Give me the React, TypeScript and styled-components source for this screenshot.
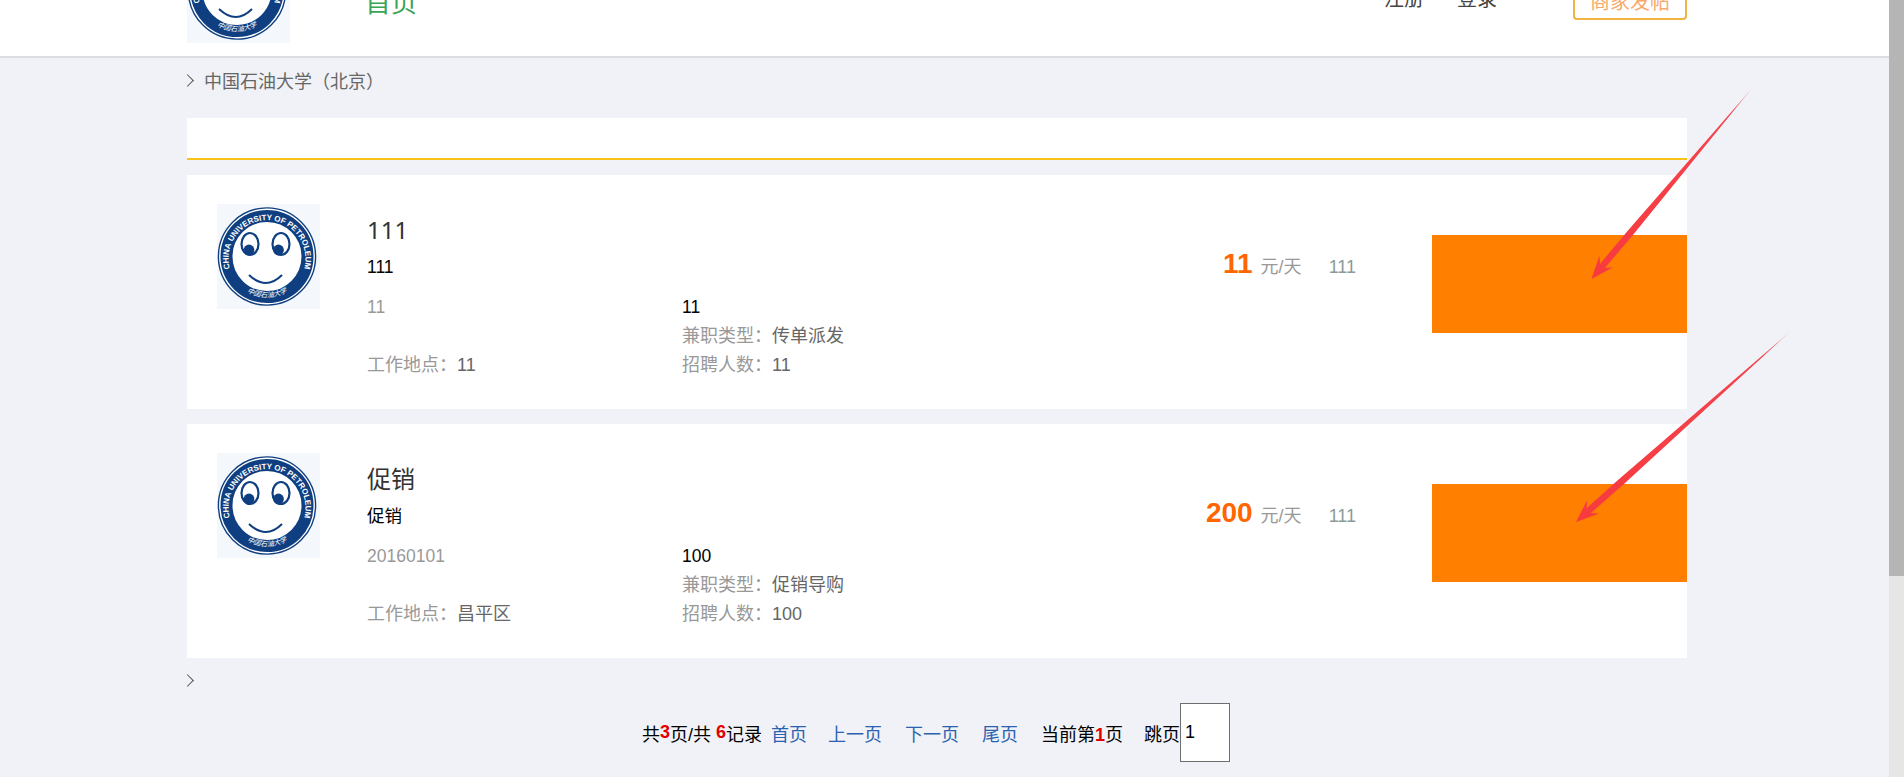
import { useId } from "react";
import styled, { createGlobalStyle } from "styled-components";

interface JobItem {
  title: string;
  subtitle: string;
  date: string;
  extra: string;
  jobType: string;
  place: string;
  people: string;
  price: string;
  unitNote: string;
}

const jobs: JobItem[] = [
  {
    title: "111",
    subtitle: "111",
    date: "11",
    extra: "11",
    jobType: "传单派发",
    place: "11",
    people: "11",
    price: "11",
    unitNote: "111",
  },
  {
    title: "促销",
    subtitle: "促销",
    date: "20160101",
    extra: "100",
    jobType: "促销导购",
    place: "昌平区",
    people: "100",
    price: "200",
    unitNote: "111",
  },
];

const GlobalStyle = createGlobalStyle`
  html, body {
    margin: 0;
    padding: 0;
    height: 777px;
    overflow: hidden;
    background: #f1f2f7;
    font-family: "Liberation Sans", "Noto Sans CJK SC", sans-serif;
  }
`;

const Logo = () => {
  const id = useId();
  return (
    <LogoSvg viewBox="0 0 103 105">
      <rect width="103" height="105" fill="#f4f8fd" />
      <circle cx="50" cy="52.5" r="48.6" fill="#fff" stroke="#0f3f80" strokeWidth="1.4" />
      <circle cx="50" cy="52.5" r="40.5" fill="#fff" stroke="#0f3f80" strokeWidth="12" />
      <defs>
        <path id={`${id}top`} d="M 12.2 62 A 38.5 38.5 0 1 1 87.8 62" />
        <path id={`${id}bottom`} d="M 13 70 A 41 41 0 0 0 87 70" />
      </defs>
      <text fill="#fff" fontSize="8" fontWeight="700" fontFamily="Liberation Sans, sans-serif">
        <textPath href={`#${id}top`} startOffset="50%" textAnchor="middle">
          CHINA UNIVERSITY OF PETROLEUM
        </textPath>
      </text>
      <text fill="#fff" fontSize="7" fontStyle="italic" fontFamily="Noto Sans CJK SC, sans-serif">
        <textPath href={`#${id}bottom`} startOffset="50%" textAnchor="middle">
          中国石油大学
        </textPath>
      </text>
      <ellipse cx="33" cy="40" rx="8.5" ry="11" fill="#fff" stroke="#0f3f80" strokeWidth="2.2" />
      <ellipse cx="64" cy="40" rx="8.5" ry="11" fill="#fff" stroke="#0f3f80" strokeWidth="2.2" />
      <circle cx="32" cy="46" r="5.4" fill="#0f3f80" />
      <circle cx="61.5" cy="46" r="5.4" fill="#0f3f80" />
      <path d="M32 71 Q49 87 65 71" fill="none" stroke="#0f3f80" strokeWidth="2" />
    </LogoSvg>
  );
};

interface ArrowProps {
  tail: [number, number];
  tip: [number, number];
}

// tapered red annotation arrow, thin at the tail and fat next to the head
const Arrow = ({ tail, tip }: ArrowProps) => {
  const dx = tail[0] - tip[0];
  const dy = tail[1] - tip[1];
  const len = Math.hypot(dx, dy);
  const ux = dx / len;
  const uy = dy / len;
  const at = (along: number, side: number) =>
    `${tip[0] + ux * along - uy * side},${tip[1] + uy * along + ux * side}`;
  const points = [
    at(0, 0),
    at(23, 9),
    at(17, 3.2),
    at(60, 3.4),
    at(len, 0),
    at(60, -3.4),
    at(17, -3.2),
    at(23, -9),
  ].join(" ");
  const gradientId = `fade${Math.round(tail[0])}`;
  return (
    <>
      <defs>
        <linearGradient
          id={gradientId}
          gradientUnits="userSpaceOnUse"
          x1={tail[0]}
          y1={tail[1]}
          x2={tip[0]}
          y2={tip[1]}
        >
          <stop offset="0" stopColor="#e8c4c8" />
          <stop offset="0.14" stopColor="#f2444e" />
          <stop offset="1" stopColor="#f83a3e" />
        </linearGradient>
      </defs>
      <polygon points={points} fill={`url(#${gradientId})`} />
    </>
  );
};

const App = () => {
  return (
    <Page>
      <GlobalStyle />
      <Header>
        <HeaderInner>
          <HeaderLogo>
            <Logo />
          </HeaderLogo>
          <HomeLink>首页</HomeLink>
          <NavSpacer />
          <NavLink>注册</NavLink>
          <NavLink>登录</NavLink>
          <PostButton>商家发帖</PostButton>
        </HeaderInner>
      </Header>

      <Main>
        <Crumb>
          <Chevron />
          中国石油大学（北京）
        </Crumb>
        <TitleBand />

        <JobList>
          {jobs.map((job) => (
            <JobCard key={job.title}>
              <CardLogo>
                <Logo />
              </CardLogo>
              <JobInfo>
                <JobTitle>{job.title}</JobTitle>
                <JobSubtitle>{job.subtitle}</JobSubtitle>
                <InfoGrid>
                  <InfoCell>
                    <DateText>{job.date}</DateText>
                    <InfoLine>
                      工作地点：<InfoValue>{job.place}</InfoValue>
                    </InfoLine>
                  </InfoCell>
                  <InfoCell>
                    <ExtraText>{job.extra}</ExtraText>
                    <InfoLine>
                      兼职类型：<InfoValue>{job.jobType}</InfoValue>
                    </InfoLine>
                    <InfoLine>
                      招聘人数：<InfoValue>{job.people}</InfoValue>
                    </InfoLine>
                  </InfoCell>
                </InfoGrid>
              </JobInfo>
              <PriceBox>
                <Price>{job.price}</Price>
                <Unit>元/天</Unit>
                <UnitNote>{job.unitNote}</UnitNote>
              </PriceBox>
              <ApplyBlock />
            </JobCard>
          ))}
        </JobList>

        <BottomCrumb>
          <Chevron />
        </BottomCrumb>

        <Pager>
          共<PagerNum>3</PagerNum>页/共 <PagerNum>6</PagerNum>记录 <PagerLink>首页</PagerLink>
          <PagerLink>上一页</PagerLink>
          <PagerLink>下一页</PagerLink>
          <PagerLink>尾页</PagerLink>
          <PagerCurrent>
            当前第<PagerNum>1</PagerNum>页
          </PagerCurrent>
          <PagerJump>跳页</PagerJump>
          <PagerInput defaultValue="1" />
        </Pager>
      </Main>

      <Scrollbar>
        <ScrollThumb />
      </Scrollbar>

      <ArrowLayer viewBox="0 0 1904 777">
        <Arrow tail={[1753, 87]} tip={[1591.5, 279]} />
        <Arrow tail={[1792, 330]} tip={[1576, 522]} />
      </ArrowLayer>
    </Page>
  );
};

export default App;

const Page = styled.div`
  position: relative;
  width: 1904px;
  height: 777px;
  overflow: hidden;
  background: #f1f2f7;
`;

const Header = styled.header`
  height: 56px;
  background: #fff;
  border-bottom: 2px solid #dcdce3;
  overflow: hidden;
`;

const HeaderInner = styled.div`
  display: flex;
  align-items: center;
  width: 1500px;
  height: 0;
  margin-left: 187px;
`;

const HeaderLogo = styled.div`
  width: 103px;
  height: 105px;
  flex: none;
  margin-top: -20px;
`;

const LogoSvg = styled.svg`
  display: block;
  width: 100%;
  height: 100%;
`;

const HomeLink = styled.a`
  margin-left: 75px;
  font-size: 26px;
  color: #3aa655;
  white-space: nowrap;
`;

const NavSpacer = styled.div`
  flex: 1;
`;

const NavLink = styled.a`
  margin-right: 33px;
  font-size: 20px;
  color: #444;
  white-space: nowrap;
  position: relative;
  top: -3px;
`;

const PostButton = styled.a`
  box-sizing: border-box;
  display: flex;
  align-items: center;
  justify-content: center;
  flex: none;
  width: 114px;
  height: 40px;
  margin-left: 43px;
  border: 2px solid #f1b341;
  border-radius: 4px;
  font-size: 20px;
  color: #f9a86a;
`;

const Main = styled.main`
  width: 1500px;
  margin-left: 187px;
`;

const Crumb = styled.div`
  box-sizing: border-box;
  display: flex;
  align-items: center;
  gap: 12px;
  height: 60px;
  padding-bottom: 16px;
  font-size: 18px;
  color: #666;
`;

const Chevron = styled.span`
  display: block;
  flex: none;
  width: 8px;
  height: 8px;
  margin-left: -4px;
  border-top: 1px solid #555;
  border-right: 1px solid #555;
  transform: rotate(45deg);
`;

const TitleBand = styled.div`
  height: 40px;
  background: #fff;
  border-bottom: 2px solid #f7c21a;
`;

const JobList = styled.div`
  display: flex;
  flex-direction: column;
  gap: 15px;
  margin-top: 15px;
`;

const JobCard = styled.article`
  display: flex;
  align-items: flex-start;
  height: 234px;
  background: #fff;
`;

const CardLogo = styled.div`
  width: 103px;
  height: 105px;
  flex: none;
  margin: 29px 0 0 30px;
`;

const JobInfo = styled.div`
  flex: 1;
  margin-left: 47px;
  padding-top: 39px;
`;

const JobTitle = styled.h3`
  margin: 0;
  font-family: "Noto Sans", "Noto Sans CJK SC", sans-serif;
  font-size: 24px;
  font-weight: 400;
  line-height: 32px;
  color: #333;
`;

const JobSubtitle = styled.p`
  margin: 9px 0 0;
  font-size: 17.5px;
  line-height: 24px;
  color: #000;
`;

const InfoGrid = styled.div`
  display: grid;
  grid-template-columns: 315px 1fr;
  margin-top: 14px;
`;

const InfoCell = styled.div`
  display: flex;
  flex-direction: column;
  height: 87px;
  justify-content: space-between;
`;

const DateText = styled.span`
  font-size: 17.5px;
  line-height: 29px;
  color: #999;
`;

const ExtraText = styled.span`
  font-size: 17.5px;
  line-height: 29px;
  color: #000;
`;

const InfoLine = styled.span`
  font-size: 18px;
  line-height: 29px;
  color: #999;
`;

const InfoValue = styled.span`
  font-size: 18px;
  color: #666;
`;

const PriceBox = styled.div`
  display: flex;
  align-items: baseline;
  flex: none;
  margin-top: 73px;
  height: 32px;
`;

const Price = styled.span`
  font-size: 28px;
  font-weight: 700;
  line-height: 32px;
  color: #ff6600;
`;

const Unit = styled.span`
  margin-left: 8px;
  font-size: 18px;
  color: #999;
`;

const UnitNote = styled.span`
  margin-left: 27px;
  font-size: 18px;
  color: #8b9b9b;
`;

const ApplyBlock = styled.div`
  flex: none;
  width: 255px;
  height: 98px;
  margin: 60px 0 0 76px;
  background: #ff8000;
`;

const BottomCrumb = styled.div`
  display: flex;
  align-items: center;
  height: 45px;
`;

const Pager = styled.div`
  display: flex;
  align-items: center;
  white-space: pre;
  height: 59px;
  margin: 0 0 0 455px;
  font-size: 18px;
  color: #000;
`;

const PagerNum = styled.b`
  color: #e00000;
`;

const PagerLink = styled.a`
  margin-right: 23px;
  color: #2a62b0;

  &:first-of-type {
    margin-left: 4px;
    margin-right: 21px;
  }
`;

const PagerCurrent = styled.span`
  margin-right: 21px;
`;

const PagerJump = styled.span`
  margin-right: 0;
`;

const PagerInput = styled.input`
  box-sizing: border-box;
  width: 50px;
  height: 59px;
  padding: 0 4px;
  border: 1px solid #6e6e6e;
  border-radius: 0;
  background: #fff;
  font-family: inherit;
  font-size: 18px;
  color: #000;
  outline: none;
`;

const Scrollbar = styled.div`
  position: absolute;
  top: 0;
  right: 0;
  bottom: 0;
  width: 15px;
  background: #e6e6e6;
`;

const ScrollThumb = styled.div`
  height: 576px;
  background: #b5b5b5;
`;

const ArrowLayer = styled.svg`
  position: absolute;
  top: 0;
  left: 0;
  width: 1904px;
  height: 777px;
  pointer-events: none;
`;
